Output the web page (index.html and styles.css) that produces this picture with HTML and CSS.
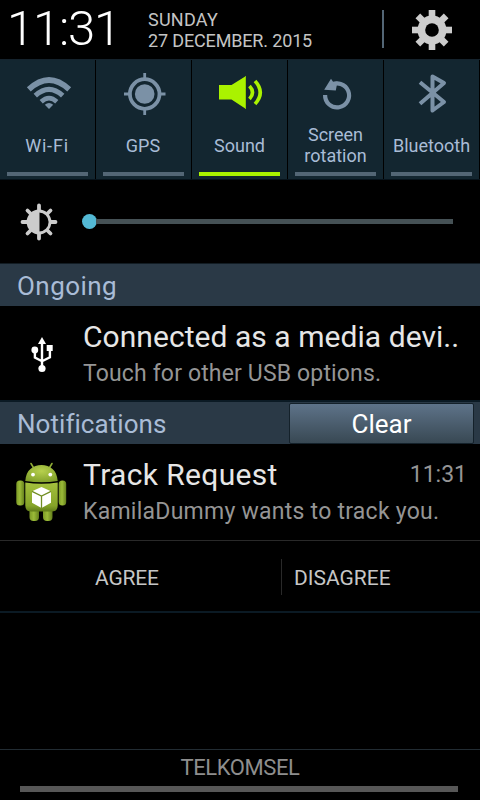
FILE: index.html
```html
<!DOCTYPE html>
<html lang="en">
<head>
<meta charset="utf-8">
<title>Notification panel</title>
<link rel="stylesheet" href="styles.css">
</head>
<body>
<main class="panel">
  <header class="status">
    <div class="clock">11:31</div>
    <div class="date"><div class="weekday">SUNDAY</div><div class="day">27 DECEMBER. 2015</div></div>
    <div class="status-divider"></div>
    <svg class="gear" width="40" height="40" viewBox="0 0 40 40">
      <g fill="#ccc">
        <rect x="16.7" y="0" width="6.6" height="40"/>
        <rect x="16.7" y="0" width="6.6" height="40" transform="rotate(90 20 20)"/>
        <rect x="16.7" y="0" width="6.6" height="40" transform="rotate(45 20 20)"/>
        <rect x="16.7" y="0" width="6.6" height="40" transform="rotate(135 20 20)"/>
        <circle cx="20" cy="20" r="14.5"/>
      </g>
      <circle cx="20" cy="20" r="6.8" fill="#000"/>
    </svg>
  </header>

  <nav class="tiles">
    <div class="tile">
      <svg class="tile-icon" width="60" height="52" viewBox="0 0 60 52">
        <g fill="none" stroke="#7b91a6">
          <path d="M10.8 23.4Q31 4.5 51.2 23.4" stroke-width="5.6"/>
          <path d="M17.3 29.6Q31 17 44.7 29.6" stroke-width="5"/>
          <path d="M23.2 35.8Q31 28.5 38.8 35.8" stroke-width="4.6"/>
        </g>
        <path d="M26.8 38.8Q31 35.2 35.2 38.8L31 43z" fill="#7b91a6"/>
      </svg>
      <span class="tile-label wifi">Wi-Fi</span><i class="bar"></i>
    </div>
    <div class="tile">
      <svg class="tile-icon" width="60" height="52" viewBox="0 0 60 52">
        <g fill="none" stroke="#7b91a6">
          <circle cx="30.7" cy="28" r="14.8" stroke-width="3.8"/>
          <path d="M30.7 7v7M30.7 42v7M10 28h7M44.5 28h7" stroke-width="2.8"/>
        </g>
        <circle cx="30.7" cy="28" r="9.8" fill="#7b91a6"/>
      </svg>
      <span class="tile-label gps">GPS</span><i class="bar"></i>
    </div>
    <div class="tile on">
      <svg class="tile-icon" width="60" height="52" viewBox="0 0 60 52">
        <path d="M9 19h12.5L36 10v33L21.5 33.5H9z" fill="#aaf200"/>
        <path d="M35.5 11v31" stroke="#8dcc00" stroke-width="1"/>
        <g fill="none" stroke="#aaf200" stroke-width="3.6">
          <path d="M39.5 20q6 6.5 0 13"/><path d="M45 15q10.5 11.5 0 23"/>
        </g>
      </svg>
      <span class="tile-label">Sound</span><i class="bar"></i>
    </div>
    <div class="tile">
      <svg class="tile-icon" width="60" height="52" viewBox="0 0 60 52">
        <path d="M19.1 29A12 12 0 1 0 24.5 19.4" fill="none" stroke="#7b91a6" stroke-width="4.2"/>
        <path d="M25 12.7l2.2 3.4 4.3-.6-1.7 8.9-11.6-.7z" fill="#7b91a6"/>
      </svg>
      <span class="tile-label two">Screen<br>rotation</span><i class="bar"></i>
    </div>
    <div class="tile">
      <svg class="tile-icon" width="60" height="52" viewBox="0 0 60 52">
        <path d="M18 16.2L42 36 30.5 44.5V10.5L42 17 18 37.8" fill="none" stroke="#7b91a6" stroke-width="4" stroke-linejoin="round"/>
      </svg>
      <span class="tile-label">Bluetooth</span><i class="bar"></i>
    </div>
  </nav>

  <section class="brightness">
    <svg width="38" height="38" viewBox="0 0 38 38">
      <g stroke="#ccc" stroke-width="3.8" stroke-linecap="round">
        <path d="M19 2.5v33M2.5 19h33M7.5 7.5l23 23M30.5 7.5l-23 23"/>
      </g>
      <circle cx="19" cy="19" r="11" fill="#000" stroke="#ccc" stroke-width="2.8"/>
      <path d="M19.5 7.5a11.5 11.5 0 0 0 0 23z" fill="#ccc"/>
    </svg>
    <div class="slider"><i class="knob"></i><i class="track"></i></div>
  </section>

  <h2 class="section ongoing">Ongoing</h2>
  <article class="item usb">
    <div class="item-icon">
      <svg width="22" height="36" viewBox="0 0 22 36">
        <g fill="none" stroke="#fff" stroke-width="2.4">
          <path d="M11 4v28M3.9 13v7.5l7.1 3.7 7.9-4V12"/>
        </g>
        <g fill="#fff"><path d="M11 0l4 7H7z"/><circle cx="3.8" cy="13" r="3.4"/><rect x="15.7" y="8" width="6" height="6"/><circle cx="11" cy="31.5" r="3.6"/></g>
      </svg>
    </div>
    <div class="item-text"><div class="title conn">Connected as a media devi..</div><div class="sub">Touch for other USB options.</div></div>
  </article>

  <div class="section notif"><h2>Notifications</h2><button class="clear">Clear</button></div>
  <article class="item track-req">
    <div class="item-icon">
      <svg width="52" height="62" viewBox="0 0 52 62">
        <defs>
          <linearGradient id="body" x1="0" y1="0" x2="0" y2="1"><stop offset="0" stop-color="#a4c13d"/><stop offset=".8" stop-color="#86a429"/><stop offset="1" stop-color="#607b18"/></linearGradient>
          <linearGradient id="limb" x1="0" y1="0" x2="1" y2="0"><stop offset="0" stop-color="#7c9a26"/><stop offset=".45" stop-color="#9bbb38"/><stop offset="1" stop-color="#637e1b"/></linearGradient>
          <radialGradient id="head" cx=".5" cy=".35" r=".7"><stop offset="0" stop-color="#b7d04e"/><stop offset="1" stop-color="#7f9e29"/></radialGradient>
        </defs>
        <path d="M16 1.5l3 5M37 1.5l-3 5" stroke="#8eab34" stroke-width="1.6" stroke-linecap="round"/>
        <path d="M10.3 19C11 8 18 3 26.5 3S42 8 42.7 19q-16 2.6-32.4 0z" fill="url(#head)"/>
        <circle cx="18" cy="12.6" r="1.9" fill="#fff"/><circle cx="35.3" cy="12.6" r="1.9" fill="#fff"/>
        <g fill="url(#limb)"><rect x="1.3" y="18.5" width="8" height="25" rx="3.5"/><rect x="43.7" y="18.5" width="7.5" height="25" rx="3.5"/><rect x="14.5" y="43" width="9.5" height="16" rx="4"/><rect x="28" y="43" width="9.5" height="16" rx="4"/></g>
        <path d="M10.3 20.5q16 2.6 32.4 0v23q0 6-6 6H16.3q-6 0-6-6z" fill="url(#body)"/>
        <path d="M26.5 25l9.5 4.3v11.5L26.5 46 17 40.8V29.3z" fill="#fff"/>
        <path d="M17 29.3l9.5 4.7 9.5-4.7M26.5 34v12" fill="none" stroke="#718d22" stroke-width="1.3"/>
      </svg>
    </div>
    <div class="item-text"><div class="title-row"><div class="title">Track Request</div><time>11:31</time></div><div class="sub kamila">KamilaDummy wants to track you.</div></div>
  </article>
  <div class="actions"><span class="agree">AGREE</span><i class="action-divider"></i><span class="disagree">DISAGREE</span></div>

  <div class="spacer"></div>
  <footer class="carrier"><span>TELKOMSEL</span><i class="handle"></i></footer>
</main>
</body>
</html>
```
FILE: styles.css
```css
* { box-sizing: border-box; }
body { margin: 0; background: #000; font-family: Roboto, "Liberation Sans", sans-serif; }
h2 { margin: 0; font: inherit; }
i { display: block; }
svg { display: block; flex: none; }
.panel { width: 480px; height: 800px; display: flex; flex-direction: column; overflow: hidden; white-space: nowrap; }
.panel > * { flex: none; }

.status { height: 60px; display: flex; border-bottom: 1px solid #15232d; }
.clock { width: 141px; margin-left: 7px; font-size: 49px; font-weight: 300; line-height: 57px; color: #fff; letter-spacing: -1.2px; }
.date { width: 234px; padding-top: 9px; font-size: 18px; line-height: 21px; color: #c4c4c4; }
.weekday { letter-spacing: 0.25px; }
.day { letter-spacing: -0.15px; }
.status-divider { width: 2px; height: 38px; margin-top: 10px; background: #536675; }
.gear { margin: 10px 0 0 28px; }

.tiles { height: 120px; display: grid; grid-template-columns: repeat(5, 95px); gap: 1px; border-bottom: 1px solid #07131b; }
.tile { background: #132630; display: flex; flex-direction: column; align-items: center; }
.tile-icon { margin-top: 6px; margin-left: 1px; }
.tile-label { height: 54px; line-height: 54px; padding-top: 1px; font-size: 18px; color: #a9bcd6; text-align: center; }
.tile-label.wifi { letter-spacing: 0.8px; margin-right: 1px; }
.tile-label.gps { margin-right: 1px; }
.tile-label.two { line-height: 21px; padding-top: 6px; }
.bar { width: 81px; height: 4px; background: #536675; }
.on .bar { background: #aaf200; }

.brightness { height: 84px; padding: 23px 0 0 20px; display: flex; border-bottom: 1px solid #121c23; }
.slider { height: 36px; margin-left: 24px; display: flex; align-items: center; }
.knob { width: 15px; height: 15px; border-radius: 50%; background: #53b9d5; }
.track { width: 357px; height: 5px; margin-left: -1px; background: #455155; }

.section { height: 42px; padding-left: 17px; background: #2a3946; color: #a9bcd6; font-size: 26px; line-height: 44px; letter-spacing: 0.05px; }
.ongoing { letter-spacing: 0.45px; }
.item { display: flex; }
.item-icon { width: 83px; flex: none; }
.item-text { flex: 1; }
.usb { height: 96px; border-bottom: 2px solid #0b1a24; }
.usb .item-icon { padding: 31px 0 0 30.5px; }
.usb .item-text { padding-top: 11px; }
.title { font-size: 30px; line-height: 40px; color: #e6e6e6; letter-spacing: 0.35px; }
.title.conn { letter-spacing: 0.05px; }
.sub { font-size: 23px; line-height: 34px; color: #959595; letter-spacing: 0.15px; }
.sub.kamila { letter-spacing: 0.25px; }
.notif { display: flex; justify-content: space-between; padding-right: 6px; }
.clear { width: 185px; height: 41px; margin-top: 1px; padding: 2px 0 0; border: 1px solid #14212a; border-radius: 2px; background: linear-gradient(#5e7389, #384853); color: #fff; font: 26px/37px Roboto, sans-serif; }
.track-req { height: 97px; border-bottom: 1px solid #292929; }
.track-req .item-icon { padding: 18px 0 0 15px; }
.track-req .item-text { padding-top: 11px; }
.title-row { display: flex; justify-content: space-between; padding-right: 13px; }
time { font-size: 23px; line-height: 40px; color: #959595; }
.actions { height: 72px; display: flex; align-items: flex-start; border-bottom: 2px solid #0b1a24; font-size: 21px; line-height: 74px; color: #c6c6c6; }
.agree { width: 186px; margin-left: 95px; letter-spacing: -0.2px; }
.action-divider { width: 1px; height: 36px; margin-top: 18px; background: #292929; }
.disagree { margin-left: 12px; }
.panel > .spacer { flex: 1; }
.carrier { height: 51px; border-top: 1px solid #222c33; text-align: center; font-size: 22px; line-height: 36px; color: #8e8e8e; }
.carrier span { display: block; letter-spacing: -0.4px; }
.handle { width: 438px; height: 6px; margin-left: 20px; background: #575757; }
```
